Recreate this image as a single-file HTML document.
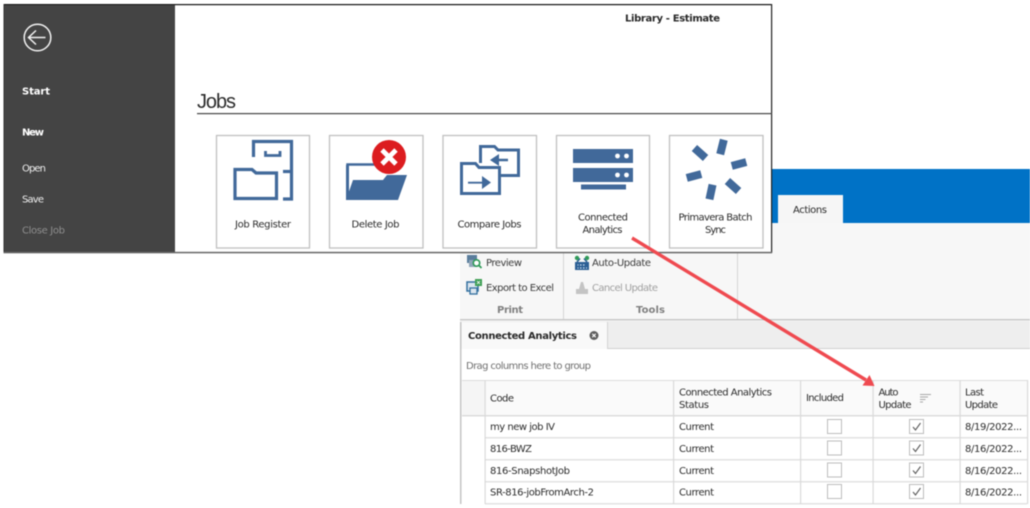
<!DOCTYPE html>
<html>
<head>
<meta charset="utf-8">
<style>
html,body{margin:0;padding:0;background:#fff;width:1030px;height:508px;overflow:hidden}
svg{display:block;filter:blur(0.45px)}
text{font-family:"DejaVu Sans","Liberation Sans",sans-serif;font-size:10px;fill:#2c2c2c}
.b{font-weight:bold}
.c{text-anchor:middle}
.w{fill:#fff}
.g{fill:#a0a0a0}
</style>
</head>
<body>
<svg width="1030" height="508" viewBox="0 0 1030 508" xmlns="http://www.w3.org/2000/svg">
<!-- back window -->
<rect x="772" y="169" width="258" height="54" fill="#0072c6"/>
<rect x="778" y="195" width="65" height="28" fill="#f6f6f6"/>
<text x="793" y="213" textLength="34">Actions</text>
<rect x="460" y="223" width="570" height="97" fill="#f7f7f7"/>
<rect x="563" y="253" width="1" height="66" fill="#d4d4d4"/>
<rect x="737" y="253" width="1" height="66" fill="#d4d4d4"/>
<rect x="460" y="319" width="570" height="1.500" fill="#c8c8c8"/>
<rect x="460" y="321" width="570" height="28" fill="#eeeeee"/>
<rect x="460" y="348" width="570" height="1" fill="#cfcfcf"/>
<rect x="460" y="322" width="147" height="27" fill="#f9f9f9"/>
<rect x="607" y="322" width="1" height="27" fill="#d4d4d4"/>
<rect x="460" y="349" width="570" height="31" fill="#fff"/>
<rect x="460" y="322" width="1.500" height="182" fill="#c4c4c4"/>

<text x="486" y="266" textLength="36" style="fill:#3c3c3c">Preview</text>
<text x="486" y="291" textLength="68" style="fill:#3c3c3c">Export to Excel</text>
<text class="b" x="497" y="313" textLength="26" style="fill:#808080">Print</text>
<text x="592" y="266" textLength="59" style="fill:#3c3c3c">Auto-Update</text>
<text class="g" x="592" y="291" textLength="66">Cancel Update</text>
<text class="b" x="636" y="313" textLength="29" style="fill:#808080">Tools</text>
<text class="b" x="468" y="339" textLength="109" style="fill:#2a2a2a">Connected Analytics</text>
<circle cx="594" cy="335.500" r="4.500" fill="#5f5f5f"/>
<path d="M592.300 333.800l3.400 3.400m0-3.400l-3.400 3.400" stroke="#fff" stroke-width="1.100"/>
<text x="466" y="369" textLength="125" style="fill:#707070">Drag columns here to group</text>

<!-- ribbon icons -->
<rect x="467" y="255" width="10" height="8" fill="#5a7d9c"/>
<rect x="469" y="260" width="8" height="7" fill="#8fa5b8"/>
<circle cx="476.500" cy="263" r="3.200" fill="#fff" stroke="#2f9a58" stroke-width="1.600"/>
<path d="M479 265.500l2.500 2.500" stroke="#2f9a58" stroke-width="1.800"/>
<rect x="467" y="282" width="11" height="9" fill="#dce6ef" stroke="#33709f" stroke-width="1.500"/>
<rect x="470" y="288" width="7" height="6" fill="#dce6ef" stroke="#33709f" stroke-width="1.300"/>
<rect x="475" y="279" width="7" height="7" fill="#3f9f55"/>
<path d="M477 281l3 3m0-3l-3 3" stroke="#fff" stroke-width=".8"/>
<rect x="575" y="262" width="14" height="8" fill="#2c5f95"/>
<path d="M577 262l3-3.500M587 262l-3-3.500" stroke="#2c5f95" stroke-width="1.500"/>
<circle cx="577" cy="258" r="2.200" fill="#2f9a58"/>
<circle cx="587" cy="258" r="2.200" fill="#2f9a58"/>
<path d="M580 265h1.500M583 265h1.500M577.500 265h1M577.500 268h1M580 268h1.500M583 268h1.500M586 268h1" stroke="#cfe0f0" stroke-width="1.200"/>
<path d="M581 282l-2 7h6l-2-7zM576 289h12v5h-12z" fill="#c4c4c4"/>

<!-- grid header -->
<rect x="462" y="380" width="565" height="35" fill="#fafafa"/>
<rect x="462" y="380" width="23" height="35" fill="#f5f5f5"/>
<rect x="462" y="380" width="565" height="1" fill="#dcdcdc"/>
<rect x="462" y="415" width="565" height="1.500" fill="#dcdcdc"/>
<rect x="485" y="437" width="542" height="1.500" fill="#e2e2e2"/>
<rect x="485" y="459" width="542" height="1.500" fill="#e2e2e2"/>
<rect x="485" y="481" width="542" height="1.500" fill="#e2e2e2"/>
<rect x="485" y="503" width="542" height="1.500" fill="#e2e2e2"/>
<g fill="#dadada">
<rect x="484.500" y="380" width="1.200" height="124"/>
<rect x="673" y="380" width="1.200" height="124"/>
<rect x="800" y="380" width="1.200" height="124"/>
<rect x="872.500" y="380" width="1.200" height="124"/>
<rect x="959.500" y="380" width="1.200" height="124"/>
<rect x="1027" y="380" width="1.200" height="124"/>
</g>
<text x="490" y="401.500" textLength="24">Code</text>
<text x="679" y="395.500" textLength="93">Connected Analytics</text>
<text x="679" y="408" textLength="30">Status</text>
<text x="806" y="401" textLength="38">Included</text>
<text x="878.500" y="395.500" textLength="20">Auto</text>
<text x="878.500" y="408" textLength="33">Update</text>
<text x="965" y="395.500" textLength="19">Last</text>
<text x="965" y="408" textLength="33">Update</text>
<path d="M920 394.500h11M920 397h8M920 399.500h5.500M920 402h3" stroke="#a8a8a8" stroke-width="1"/>

<text x="490" y="430" textLength="65">my new job IV</text>
<text x="490" y="452" textLength="42">816-BWZ</text>
<text x="490" y="474" textLength="80">816-SnapshotJob</text>
<text x="490" y="495.500" textLength="104">SR-816-jobFromArch-2</text>
<g>
<text x="679" y="430" textLength="35">Current</text>
<text x="679" y="452" textLength="35">Current</text>
<text x="679" y="474" textLength="35">Current</text>
<text x="679" y="495.500" textLength="35">Current</text>
<text x="965" y="430" textLength="57">8/19/2022...</text>
<text x="965" y="452" textLength="57">8/16/2022...</text>
<text x="965" y="474" textLength="57">8/16/2022...</text>
<text x="965" y="495.500" textLength="57">8/16/2022...</text>
</g>
<g fill="#fff" stroke="#bdbdbd" stroke-width="1">
<rect x="827.500" y="419.500" width="14" height="14"/>
<rect x="827.500" y="441" width="14" height="14"/>
<rect x="827.500" y="463" width="14" height="14"/>
<rect x="827.500" y="484.500" width="14" height="14"/>
<rect x="909.500" y="419.500" width="14" height="14"/>
<rect x="909.500" y="441" width="14" height="14"/>
<rect x="909.500" y="463" width="14" height="14"/>
<rect x="909.500" y="484.500" width="14" height="14"/>
</g>
<g fill="none" stroke="#5c5c5c" stroke-width="1.100">
<path d="M913 427l2.500 3 5-7"/>
<path d="M913 448.500l2.500 3 5-7"/>
<path d="M913 470.500l2.500 3 5-7"/>
<path d="M913 492l2.500 3 5-7"/>
</g>

<!-- front window -->
<rect x="4" y="4" width="768" height="249" fill="#fff"/>
<rect x="4" y="4" width="768" height="1.200" fill="#111"/>
<rect x="771" y="4" width="1.200" height="249" fill="#222"/>
<rect x="4" y="5" width="171" height="247" fill="#444444"/>
<rect x="3.500" y="4" width="1" height="249" fill="#333"/>
<rect x="3.500" y="251.800" width="768.500" height="1.500" fill="#666"/>

<circle cx="37.500" cy="37.500" r="13.300" fill="none" stroke="#f2f2f2" stroke-width="1.500"/>
<path d="M45.500 37.500H29M36 30.500l-7.500 7 7.500 7" fill="none" stroke="#f2f2f2" stroke-width="1.500"/>
<text class="b w" x="22" y="94.500" textLength="28">Start</text>
<text class="b w" x="22" y="135.500" textLength="22">New</text>
<text x="22" y="171.500" textLength="24" style="fill:#eeeeee">Open</text>
<text x="22" y="202.500" textLength="22" style="fill:#eeeeee">Save</text>
<text x="22" y="233.500" textLength="43" style="fill:#8e8e8e">Close Job</text>

<text class="b" x="625" y="21.500" textLength="95" style="fill:#2a2a2a">Library - Estimate</text>
<text x="197" y="108" textLength="39" style="font-family:'Liberation Sans',sans-serif;font-size:20px;fill:#2c2c2c">Jobs</text>
<rect x="197" y="113" width="575" height="1.200" fill="#444"/>

<!-- buttons -->
<g fill="#fff" stroke="#c0c0c0" stroke-width="1.300">
<rect x="216.500" y="135.500" width="93" height="112.500"/>
<rect x="329.500" y="135.500" width="93.500" height="112.500"/>
<rect x="443" y="135.500" width="93.500" height="112.500"/>
<rect x="556.500" y="135.500" width="93" height="112.500"/>
<rect x="669.500" y="135.500" width="93.500" height="112.500"/>
</g>
<text class="c" x="263" y="227.500" textLength="56">Job Register</text>
<text class="c" x="375.500" y="227.500" textLength="48">Delete Job</text>
<text class="c" x="489.500" y="227.500" textLength="64">Compare Jobs</text>
<text class="c" x="603" y="220.500" textLength="50">Connected</text>
<text class="c" x="602.500" y="233" textLength="40">Analytics</text>
<text class="c" x="715.500" y="220.500" textLength="74">Primavera Batch</text>
<text class="c" x="715.500" y="233" textLength="21">Sync</text>

<!-- Job Register icon -->
<g fill="none" stroke="#41699a" stroke-width="3.200">
<path d="M253.500 157V141.500H291.500V199H283"/>
<path d="M283 171.500H291"/>
<path d="M235 198.500V169.500H252L256 173H276.500V198.500Z"/>
<path d="M265.500 151V155.500H280V151" stroke-width="2.800"/>
</g>

<!-- Delete icon -->
<path d="M347.500 199V164.500H376" fill="none" stroke="#41699a" stroke-width="2.500"/>
<path d="M346 200L353 180H383L387 175H407L398 200Z" fill="#41699a"/>
<rect x="346" y="165" width="3" height="35" fill="#41699a"/>
<circle cx="389" cy="157" r="17" fill="#dc1c1f"/>
<path d="M382 150L396 164M396 150L382 164" stroke="#fff" stroke-width="4.800"/>

<!-- Compare icon -->
<path d="M480.500 163V146.500H494.500L498 150H518.500V175.500H500" fill="none" stroke="#41699a" stroke-width="3"/>
<path d="M461.500 193.500V163.500H475.500L479 167.500H499.500V193.500Z" fill="#fff" stroke="#41699a" stroke-width="3"/>
<path d="M508 158.800H499V154L490 160L499 166V161.200H508Z" fill="#41699a"/>
<path d="M468 181.800H482V176L491 182.500L482 189V183.600H468Z" fill="#41699a"/>

<!-- Connected Analytics icon -->
<rect x="573" y="149" width="60" height="14" fill="#41699a"/>
<rect x="573" y="168" width="60" height="14" fill="#41699a"/>
<rect x="581" y="184.500" width="45" height="5" fill="#41699a"/>
<g fill="#fff">
<circle cx="617.500" cy="156" r="2.400"/>
<circle cx="626.500" cy="156" r="2.400"/>
<circle cx="617.500" cy="175" r="2.400"/>
<circle cx="626.500" cy="175" r="2.400"/>
</g>

<!-- Primavera icon -->
<g fill="#41699a">
<rect x="-7.500" y="-4" width="15" height="8" transform="translate(700,153) rotate(42)"/>
<rect x="-7.500" y="-4" width="15" height="8" transform="translate(722,147) rotate(-76)"/>
<rect x="-7.500" y="-4" width="15" height="8" transform="translate(739,164) rotate(-15)"/>
<rect x="-7.500" y="-4" width="15" height="8" transform="translate(694,176) rotate(-15)"/>
<rect x="-7.500" y="-4" width="15" height="8" transform="translate(733,186) rotate(42)"/>
<rect x="-7.500" y="-4" width="15" height="8" transform="translate(711,192) rotate(-78)"/>
</g>

<!-- red arrow -->
<path d="M632 238L866 380" stroke="#ef4a50" stroke-width="3.400" fill="none"/>
<path d="M874.500 386L862.500 385.500L869.500 375Z" fill="#ef4a50"/>
</svg>
</body>
</html>
